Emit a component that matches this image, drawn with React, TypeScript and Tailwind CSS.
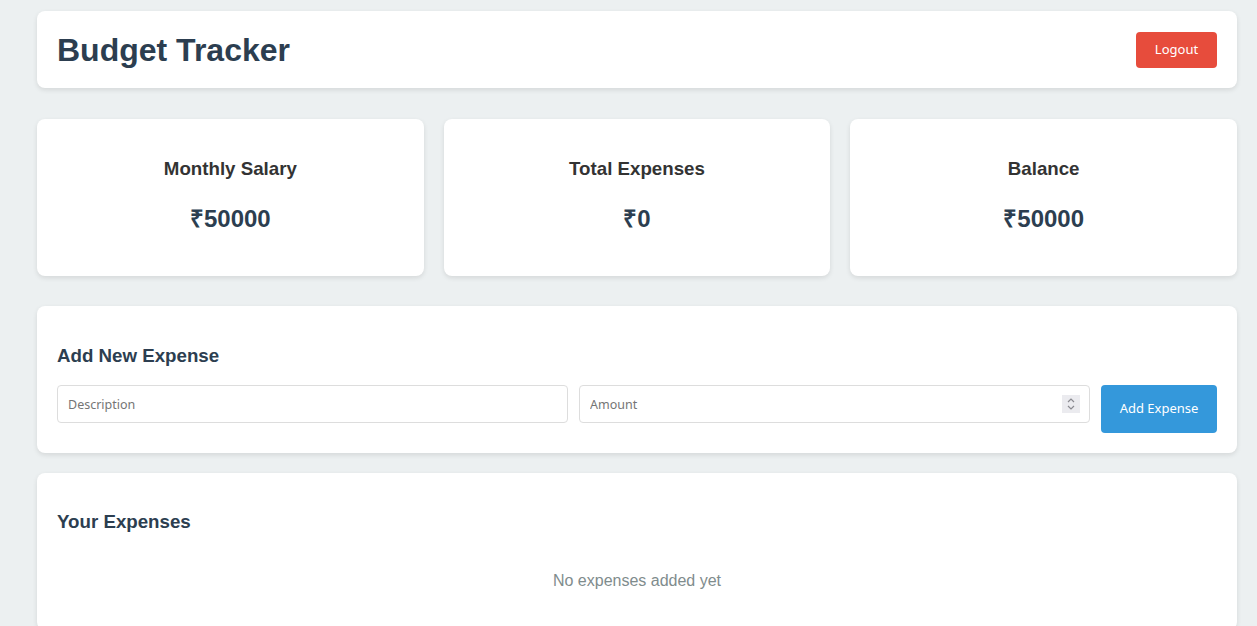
import { useState } from "react";

type Stat = { label: string; value: number };

function StatCard({ label, value }: Stat) {
  return (
    <div className="rounded-lg bg-white px-5 pt-5 pb-5 text-center shadow-[0_2px_5px_rgba(0,0,0,0.1)]">
      <h3 className="mt-[18.72px] text-[18.72px] leading-[21.5px] font-bold text-[#333333]">
        {label}
      </h3>
      <p className="mt-[26px] mb-[23px] text-[24px] leading-[27.6px] font-bold text-[#2c3e50]">
        ₹{value}
      </p>
    </div>
  );
}

export default function App() {
  const salary = 50000;
  const [description, setDescription] = useState("");
  const [amount, setAmount] = useState("");
  const expenses: { id: number; description: string; amount: number }[] = [];
  const total = expenses.reduce((sum, e) => sum + e.amount, 0);

  return (
    <div className="min-h-screen bg-[#ecf0f1] pt-[11px] pl-[37px] pr-5 font-['Liberation_Sans',Arial,sans-serif]">
      <div className="w-[1200px]">
        <header className="flex items-center justify-between rounded-lg bg-white p-5 shadow-[0_2px_5px_rgba(0,0,0,0.1)]">
          <h1 className="relative top-[1px] text-[32px] leading-[37px] font-bold text-[#2c3e50]">
            Budget Tracker
          </h1>
          <button
            type="button"
            className="h-9 w-[81px] rounded bg-[#e74c3c] pt-[1px] font-['Noto_Sans',sans-serif] text-[13px] text-white"
          >
            Logout
          </button>
        </header>

        <div className="mt-[31px] grid grid-cols-3 gap-5">
          <StatCard label="Monthly Salary" value={salary} />
          <StatCard label="Total Expenses" value={total} />
          <StatCard label="Balance" value={salary - total} />
        </div>

        <section className="mt-[30px] rounded-lg bg-white px-5 pt-5 pb-5 shadow-[0_2px_5px_rgba(0,0,0,0.1)]">
          <h3 className="mt-[18.72px] mb-[18.72px] text-[18.72px] leading-[21.5px] font-bold text-[#2c3e50]">
            Add New Expense
          </h3>
          <form
            className="grid grid-cols-[1fr_1fr_116px] items-start gap-[11px]"
            onSubmit={(e) => e.preventDefault()}
          >
            <input
              type="text"
              placeholder="Description"
              value={description}
              onChange={(e) => setDescription(e.target.value)}
              className="h-[38px] w-full min-w-0 rounded border border-[#dddddd] px-[10px] pt-[1px] font-['Noto_Sans',sans-serif] text-[12.5px] text-[#333] outline-none placeholder:text-[#757575]"
            />
            <div className="relative min-w-0">
              <input
                type="text"
                inputMode="numeric"
                placeholder="Amount"
                value={amount}
                onChange={(e) => setAmount(e.target.value)}
                className="h-[38px] w-full rounded border border-[#dddddd] px-[10px] pt-[1px] font-['Noto_Sans',sans-serif] text-[12.5px] text-[#333] outline-none placeholder:text-[#757575]"
              />
              <div className="pointer-events-none absolute top-[10px] right-[10px] flex h-[18px] w-[18px] items-center justify-center bg-[#ebebef]">
                <svg width="10" height="14" viewBox="0 0 10 14" fill="none">
                  <path d="M2 5l3-3 3 3" stroke="#8a8a90" strokeWidth="1.2" />
                  <path d="M2 9l3 3 3-3" stroke="#8a8a90" strokeWidth="1.2" />
                </svg>
              </div>
            </div>
            <button
              type="submit"
              className="h-12 w-full rounded bg-[#3498db] font-['Noto_Sans',sans-serif] text-[13px] text-white"
            >
              Add Expense
            </button>
          </form>
        </section>

        <section className="mt-5 rounded-lg bg-white px-5 pt-5 pb-5 shadow-[0_2px_5px_rgba(0,0,0,0.1)]">
          <h3 className="mt-[18.72px] mb-[18.72px] text-[18.72px] leading-[21.5px] font-bold text-[#2c3e50]">
            Your Expenses
          </h3>
          {expenses.length === 0 ? (
            <p className="p-5 text-center text-base leading-[18px] text-[#7f8c8d]">
              No expenses added yet
            </p>
          ) : null}
        </section>
      </div>
    </div>
  );
}
